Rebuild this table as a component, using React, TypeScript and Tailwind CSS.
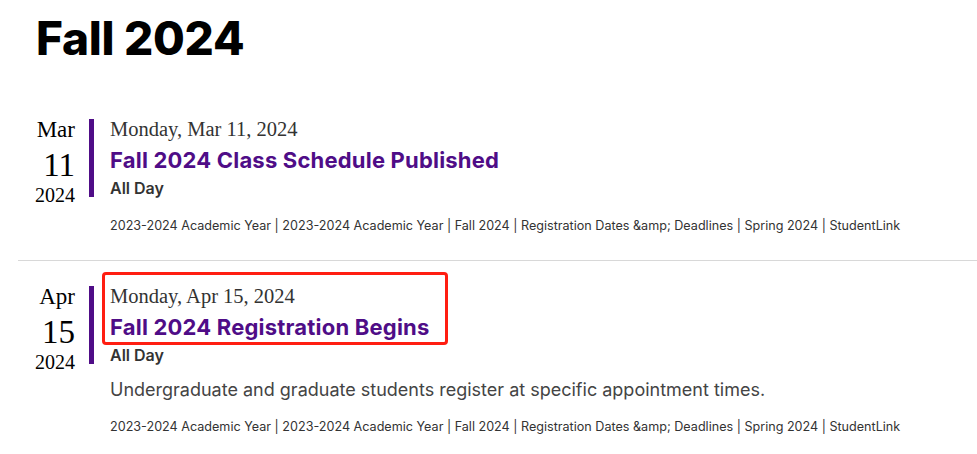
import React from "react";

const tags =
  "2023-2024 Academic Year | 2023-2024 Academic Year | Fall 2024 | Registration Dates &amp; Deadlines | Spring 2024 | StudentLink";

function DateBlock({ m, d }: { m: string; d: string }) {
  return (
    <div className="w-[57px] shrink-0 text-right text-black font-['Liberation_Serif',serif] leading-none">
      <div className="text-[23px] leading-[22px]">{m}</div>
      <div className="text-[33px] leading-[31px] mt-[9px]">{d}</div>
      <div className="text-[20px] leading-[17px] mt-[6px]">2024</div>
    </div>
  );
}

export default function App() {
  return (
    <div className="w-[977px] h-[454px] bg-white overflow-hidden relative">
      <h1 className="pl-[36px] pt-[12px] text-[46px] leading-[52px] font-extrabold text-black font-['Inter',sans-serif] tracking-[-0.3px]">
        Fall 2024
      </h1>

      <div className="mt-[55px] pl-[18px]">
        <div className="flex pb-[26px] border-b border-[#d8d8d8]">
          <DateBlock m="Mar" d="11" />
          <div className="ml-[14px] w-[5px] h-[78px] bg-[#4f0d87]" />
          <div className="ml-[16px]">
            <div className="text-[20.5px] leading-[22px] text-[#333] font-['Liberation_Serif',serif] -mt-[1px]">
              Monday, Mar 11, 2024
            </div>
            <div className="mt-[8px] text-[22px] leading-[25px] font-bold text-[#4f0d87] font-['Inter',sans-serif] tracking-[0.2px]">
              Fall 2024 Class Schedule Published
            </div>
            <div className="mt-[6px] text-[16px] leading-[18px] font-semibold text-[#333] font-['Inter',sans-serif]">
              All Day
            </div>
            <div className="mt-[21px] text-[12.6px] leading-[16px] text-[#333] font-['Inter',sans-serif]">
              {tags}
            </div>
          </div>
        </div>

        <div className="flex pt-[25px]">
          <DateBlock m="Apr" d="15" />
          <div className="ml-[14px] w-[5px] h-[78px] bg-[#4f0d87]" />
          <div className="ml-[16px] relative">
            <div className="text-[20.5px] leading-[22px] text-[#333] font-['Liberation_Serif',serif] -mt-[1px]">
              Monday, Apr 15, 2024
            </div>
            <div className="mt-[8px] text-[22px] leading-[25px] font-bold text-[#4f0d87] font-['Inter',sans-serif] tracking-[0.2px]">
              Fall 2024 Registration Begins
            </div>
            <div className="mt-[6px] text-[16px] leading-[18px] font-semibold text-[#333] font-['Inter',sans-serif]">
              All Day
            </div>
            <div className="mt-[15px] text-[18px] leading-[22px] text-[#444] font-['Inter',sans-serif]">
              Undergraduate and graduate students register at specific appointment times.
            </div>
            <div className="mt-[18px] text-[12.6px] leading-[16px] text-[#333] font-['Inter',sans-serif]">
              {tags}
            </div>
            <div className="absolute left-[-8px] top-[-14px] w-[346px] h-[73px] border-[3px] border-[#ff1e12] rounded-[4px]" />
          </div>
        </div>
      </div>
    </div>
  );
}
